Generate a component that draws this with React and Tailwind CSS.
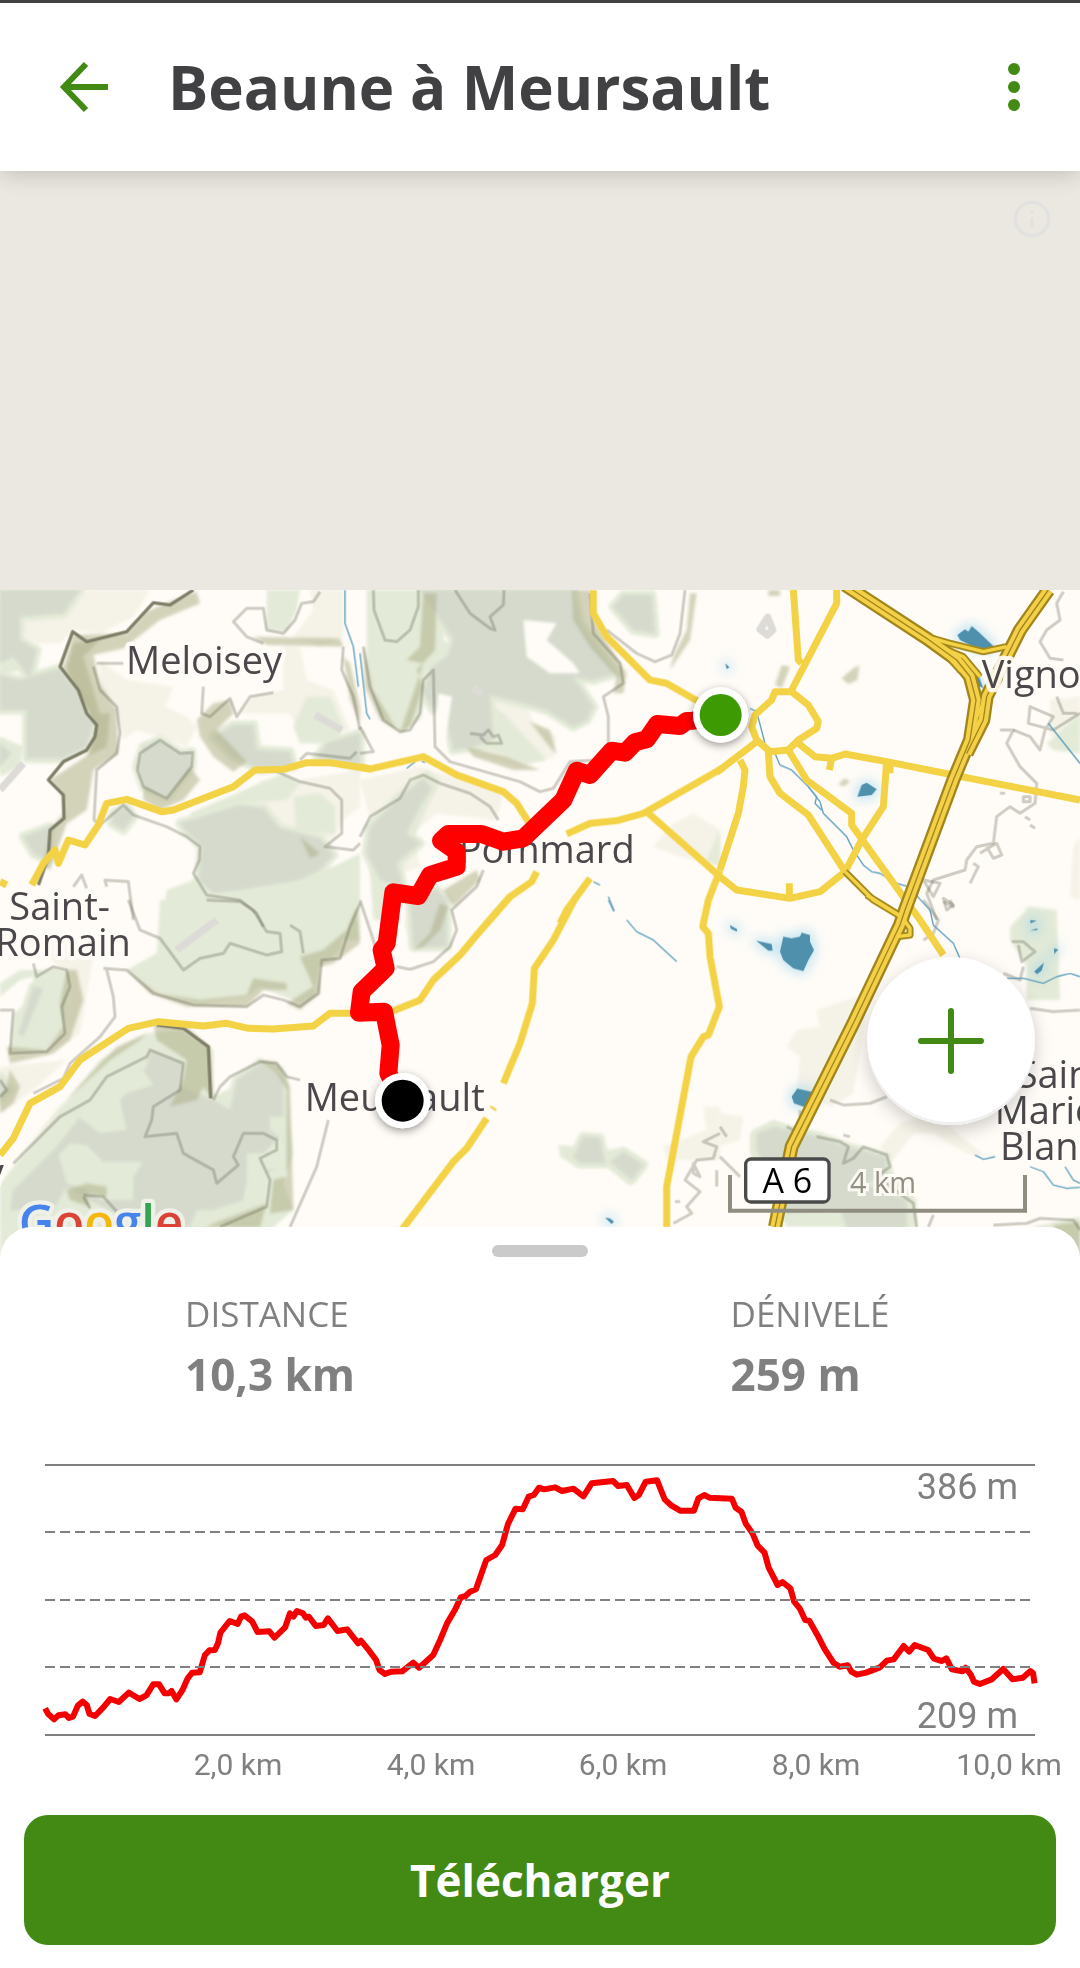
import { Info } from "lucide-react";

// The map is cut in six tiles, each with its own origin.
const tiles = [
  {
    x: 0,
    y: -30,
    cream: [
      "M60 130L130 90L190 90L260 30H450L400 110L300 160L220 150L180 190L110 190L70 170Z",
      "M300 240L380 300L520 320L495 380L560 410L590 440L560 500L480 470L410 450L370 480L350 380L300 330Z",
      "M850 200H900L920 300L1000 330L1050 450L900 470L870 400L720 400L760 350L850 330Z",
      "M790 600L900 600L1080 570V680L1030 720L1000 780L880 760L780 680L720 650Z",
      "M930 30H1030V170L960 200L880 170L940 90Z",
    ],
    green: [
      "M880 440L920 350L990 350L1030 440L1010 490H900Z",
      "M880 650L960 640L1005 680V760H890Z",
      "M800 30H900L890 90L860 155L800 150Z",
      "M0 230L40 210L70 190L110 220L100 300L60 270L0 290Z",
      "M570 700L850 580L900 610L860 660L740 670L600 760Z",
      "M500 930L580 900L640 840L780 900L1000 860L1080 820V1080H480Z",
      "M0 470L70 500L60 560L0 590Z",
    ],
    woods: [
      "M0 30H240L190 100L60 110V180L110 210L90 295L40 230L0 250Z",
      "M0 285L60 300L180 265L240 350L280 430L260 500L190 535H80V390H0Z",
      "M480 480L540 520L575 515V560L500 650L430 620L410 560L430 500Z",
      "M540 730L720 675L790 685L840 745L960 775L1000 825L960 870L900 900L720 930L640 940L595 900L605 800L560 755Z",
      "M640 470L700 435H760L770 510L870 515L880 560L780 570L700 530Z",
      "M70 770L150 740L140 840L100 820Z",
      "M980 490L1080 460V560L950 535Z",
      "M340 700L380 680L400 710L370 750L335 730Z",
      "M0 490L35 520L0 560Z",
    ],
    relief: [
      "M220 165L380 160L440 95L520 60L590 35L600 70L480 120L370 205L280 225L300 310L350 390L355 520L280 570L260 690L200 730L150 870L130 860L150 745L190 700L185 640L150 600L270 520L290 440L240 350L190 260Z",
      "M220 190L300 180L250 230L300 400L330 400L320 500L260 530L290 440L240 340L200 270Z",
      "M590 420L640 370L690 360L700 400L650 450L740 545L700 575L640 530L600 470Z",
      "M430 620L500 655L570 560L600 600L550 660L480 690L430 660Z",
      "M760 170L1020 175L1030 200L800 195Z",
      "M900 770L960 820L930 835Z",
      "M1030 230L1050 360L1080 430V380L1050 250Z",
    ],
    contours: [
      "M960 35L940 65L905 70L885 120L850 160L800 150L790 85L740 85L700 125L740 170L790 190",
      "M280 260L300 330L350 380L360 460L350 520L290 570L282 720L300 735L370 675L400 705L500 740L560 770L600 800L598 840L580 880L620 945L720 960L770 1000L790 1040",
      "M480 480L540 520L578 518L575 560L500 655L430 620L412 570L420 520Z",
      "M610 320L605 400L630 410L690 355L710 410L750 350L820 338",
      "M820 570L900 605L990 625L1025 660L1025 760L975 800L1060 810L1080 790",
      "M900 540L920 520L1050 535L1070 515",
      "M220 920L245 885L260 925M320 920L315 900L385 905L400 1020",
      "M290 250H370",
      "M1030 200L1025 270L1060 350L1080 450",
    ],
    ridges: [
      "M580 30L510 75L460 68L380 155L260 185L218 155L180 260L235 330L260 400L290 435L285 470L260 510L190 545L145 600L190 645L192 715L150 750L145 830L115 915",
    ],
    paths: ["M0 630L70 550", "M945 405L1025 450"],
    streams: ["M1035 30V130L1060 200L1075 320"],
    roads: [
      "M95 915L130 850L165 810L175 850L205 780L255 795L295 735L320 670L380 658L485 695L520 690L700 620L765 570L850 568L920 548L990 548L1110 567",
      "M0 905L20 915",
    ],
  },
  {
    x: 1080,
    y: -30,
    cream: [
      "M370 350L500 370L520 430L590 470L580 530L480 560L330 520L250 440Z",
      "M0 600L180 560L430 640L410 720L230 700L160 760L180 860L80 900Z",
      "M880 800L940 730L1000 700L1080 750V860L960 830Z",
    ],
    green: [
      "M20 30H260L250 180L300 210L290 240L220 260L180 420L120 460L60 400L20 260Z",
      "M20 740L130 640L200 570L240 600L200 680L150 800L110 900V1020H40Z",
      "M360 350L430 400L560 540L500 550L390 510L290 510L280 440Z",
    ],
    woods: [
      "M180 30H640L660 130L770 280L700 300L640 290L700 380L680 420L640 440L560 390L490 370L390 345L400 480L340 500L280 510L260 430L275 345L220 390L190 340L215 260L260 230L280 180Z",
      "M30 740L120 650L190 595L215 625L180 680L140 760L180 790L110 850L130 920L60 900L20 820Z",
      "M790 45H875L885 160L820 150L760 80Z",
      "M150 960L230 930L260 960V1100H160Z",
    ],
    base: [
      "M490 120L590 130L560 180L640 250L660 280H570L500 230Z",
      "M235 340L275 350L265 420L250 530L225 480Z",
    ],
    relief: [
      "M635 30H690L700 120L800 280L790 340L760 340L770 290L690 200L640 120Z",
      "M190 40H230L225 210L170 270L190 320L150 440L120 460L190 250L140 240L180 200Z",
      "M10 200L40 330L110 450L60 420L15 320Z",
      "M940 230L980 150L990 40H1010L990 180L930 270Z",
      "M320 500L440 530L540 570L460 570L340 530Z",
      "M510 425L570 450L590 525L560 490Z",
      "M250 930L350 870L360 900L280 980Z",
    ],
    contours: [
      "M40 30L42 90L75 180L110 185L150 150L175 80V30",
      "M285 30L330 100L390 145L405 150L390 110L430 75L432 30",
      "M690 40L700 160L780 250L790 310L730 350L745 410V490L710 540L630 545L580 625L540 635L480 605L270 545L225 500L220 270L190 300L180 400L150 450L120 455L70 420L30 320L10 200",
      "M975 30L960 160L935 225L885 245L830 220L740 150",
      "M0 770L30 710L120 655L150 600L190 585L240 610L330 640L390 680L415 720",
      "M330 460L370 465L385 450L400 470L415 465L425 490L380 490L360 470",
      "M0 440L40 515L0 520",
      "M370 870L350 920L275 990L290 1050L270 1100L220 1145L150 1168L110 1160",
    ],
    ridges: [],
    paths: ["M340 325L365 340"],
    streams: ["M0 220L20 400L30 418", "M140 565L165 545M185 543L195 548", "M700 905L720 915M745 950L762 992"],
    roads: [
      "M700 30V100L740 170L870 300L920 310L1060 390",
      "M0 560L30 567L190 530L290 585L430 635L470 670L505 725",
      "M620 762L690 730L770 722L850 700L1090 563",
      "M860 695L1080 890",
      "M530 875L515 905L450 950L380 1030",
      "M690 895L620 990L600 1030",
      "M1080 870L1045 960L1028 1040L1045 1060L1050 1130L1078 1280L1045 1365L1030 1370L993 1430L920 1820V1941",
    ],
  },
  {
    x: 2160,
    y: -30,
    cream: ["M990 360L1080 350V470H990Z", "M1060 800L1080 770V960L1050 950Z"],
    green: ["M980 490L1080 400V520L1000 510Z", "M920 980L1010 1010V1060H910Z", "M0 750V860L-40 840Z"],
    woods: [],
    relief: [
      "M185 255L210 260L185 325L165 315Z",
      "M145 30H180V48H145ZM365 295L400 265L418 255L412 300L385 312ZM355 612L375 595L390 605L370 620Z",
    ],
    contours: [
      "M1030 35L1010 70L1020 120L980 150L960 185L990 235L1030 240",
      "M840 450L880 450L860 490L900 560L950 610L945 670L900 700L870 680L830 710L820 790L770 800L740 840L735 870L640 900L620 940L650 1020",
      "M880 450L930 470L960 510L975 450L1000 410L930 380L925 430L1000 450L1080 400",
      "M780 820L830 790L845 825L820 835L800 800M670 955L700 975L680 990ZM915 710L930 720M930 735L945 745M760 850L775 860L750 910M1010 350L1030 400L1070 400",
      "M910 650H930V665H910ZM840 640H855M610 900L660 910L640 950Z",
    ],
    ridges: [],
    paths: ["M143 112L158 150L142 165L120 148Z"],
    water: [
      "M712 165L735 148L745 155L755 138L775 155L820 198L800 210L770 205L720 180Z",
      "M412 650L425 615L440 608L470 628L455 645Z",
      "M765 290L775 285L790 325L770 315Z",
      "M16 250L28 262L20 268Z",
    ],
    streams: [
      "M165 520L180 555L215 570L265 620L300 665L310 700L380 770L400 810L430 855L455 875L480 880L530 910L565 920L630 990L640 1035L700 1090L720 1135",
      "M265 620L290 650L285 670L305 690M90 385L110 395L135 490",
      "M985 430L1080 550",
    ],
    roads: [
      "M220 30L235 240L245 250",
      "M350 30V70L215 330",
      "M215 335H165L155 360L105 405L95 440L110 480L150 515L205 510L235 480L290 445L295 425L265 375Z",
      "M-10 577L110 485",
      "M235 490L285 530L335 535L375 522L500 545L700 585L1080 660",
      "M335 535L328 570M510 550V580",
      "M500 545L490 680L425 780L375 875L300 935L210 955L50 930L0 890",
      "M205 510L260 600L395 700V735L600 1020L670 1125",
      "M145 515L150 590L180 640L265 705L375 875",
      "M60 540L75 570L70 620L55 700L0 870",
      "M208 955V910",
    ],
    ramps: ["M375 875L460 960L540 1008", "M620 170L690 190L790 215L860 200", "M670 205L730 230L780 290", "M640 180L720 270L760 300", "M800 350L760 430"],
    motorways: [
      "M375 15L620 175L710 240L750 290L768 360L750 480L700 600L555 990L540 1035L400 1330L215 1700L165 1941",
      "M985 30L900 150L850 250L800 350L790 420L740 520",
    ],
  },
  {
    x: 0,
    y: 930,
    cream: ["M100 130H280V170L240 400L130 470L210 300L200 220Z", "M0 500L200 480L100 570L0 640Z"],
    green: [
      "M480 0H1060L1020 150L960 200L940 290L900 310L780 260L740 290L590 310L480 280L380 210L470 160Z",
      "M100 220L160 200L210 220L200 300L190 390L140 450L30 460L40 340L100 300Z",
      "M170 640L300 480L440 400L540 390L640 450V590L700 560L770 490L850 500L880 760L850 850L880 930L820 981V1080H0V850L40 800Z",
      "M0 250L60 210H180L60 240L0 290Z",
    ],
    woods: [
      "M360 590L440 500L450 450L550 490L540 560L640 600L690 630L710 540L780 490L850 530V650L810 650V690L850 720L830 800L740 860L730 900L640 930L590 930L570 981H450L350 940L250 890L200 860L160 930L30 930L40 870L170 740L240 650Z",
      "M100 260L130 265L70 410L55 400Z",
      "M0 530L30 570L0 600Z",
    ],
    light: [
      "M340 550L430 510L460 555L380 580L360 600L380 690L300 700L235 650Z",
      "M175 765L210 730L260 735L310 785L430 785L400 830V900H300L260 870L200 850Z",
      "M740 760L790 760L850 700L860 800L800 810L810 860L790 930H730L740 840Z",
    ],
    relief: [
      "M380 210L480 280L600 300L740 285L760 235L860 250V270H790L740 320L560 320L450 280Z",
      "M900 170L970 150L1040 90L1070 20L1080 130L1000 190L960 200V280L900 330L860 310L940 260Z",
      "M460 370L560 380L630 440L640 600L610 560L590 600L510 620L550 540L560 480L470 420Z",
      "M200 210L230 210L250 300L210 420L160 460L30 490L20 440L140 450L190 380L180 310Z",
      "M770 480L830 485L870 560L880 930L810 940L820 840L860 830V570L830 520Z",
      "M200 870L260 850L320 860V890L260 880L270 920L210 900Z",
      "M640 970L800 910L780 981H620Z",
      "M30 510L60 560L40 610L0 640V590L20 560Z",
      "M350 440L440 400L420 420L330 480L200 600L40 790L180 620Z",
    ],
    contours: [
      "M385 0L420 90L480 115L550 210L600 175L670 160L690 130L800 165L845 155L840 100L800 95L760 30L720 5L620 0",
      "M310 205L380 210L460 280L580 315L740 320L790 285L850 300L900 320L955 280L965 180L1020 175L1050 80L1080 10",
      "M320 210L340 290L345 350L300 410L210 490L190 535L100 580",
      "M0 330L40 330L30 460L140 455L195 400L185 320L210 260L200 210L160 200L110 230L100 190",
      "M40 790L180 650L270 600L320 530L440 470L450 450L550 490L540 570L460 620L455 660L435 710L530 700L550 760L640 810L650 850L715 795L700 770L730 700L790 700L830 720L830 750L780 775L810 840L800 920L660 981",
      "M900 540L860 530L830 490L780 485L690 530L660 560L640 600",
      "M250 885L310 890L350 935M250 890L270 925",
      "M985 660L950 800L870 981",
      "M870 75L900 95L910 160",
      "M0 540L20 570L0 590",
    ],
    ridges: ["M470 375L550 385L625 440L632 595"],
    paths: ["M530 150L650 60"],
    streams: [],
    roads: ["M0 765L40 715L90 610L180 560L240 480L385 385L475 365L610 378L680 370L745 385L820 387L940 378L990 340H1080"],
  },
  {
    x: 1080,
    y: 930,
    cream: ["M910 740L1040 690L1030 620H1080V780H920Z", "M130 60L260 50L250 130L160 150Z"],
    green: ["M595 735L650 740L690 705L735 750L790 745L860 790L810 855L740 800L650 800L600 770Z"],
    woods: ["M640 770L670 710L720 715L735 790H660ZM750 785L790 755L850 795L815 840Z", "M155 0H240L230 80L160 130Z"],
    relief: ["M240 10L265 20L240 90L190 140L160 150L210 100Z"],
    contours: [
      "M0 0L40 120L60 200",
      "M1080 700L1030 725L1070 740L1060 775L1010 780L975 840L1020 875L980 920L995 940L940 970M1000 790L1020 830L1000 820ZM945 905H960M1070 810V860",
    ],
    ridges: [],
    paths: [],
    water: ["M735 953L750 955L762 965L755 972Z"],
    streams: ["M745 0L762 35M800 60L830 95L880 120L950 185"],
    roads: [
      "M450 -10L350 105L300 165L220 240L180 300L60 348",
      "M648 -10L580 120L523 205L517 310L480 430L430 550",
      "M380 655L320 745L280 785L125 990",
      "M398 628L402 622",
    ],
  },
  {
    x: 2160,
    y: 930,
    cream: [
      "M290 330L410 290L440 340L400 580L330 620L230 580L240 470L200 440L230 390L300 380Z",
      "M480 740L540 670L640 640L800 770L740 760L640 700L580 700L520 780Z",
      "M0 640L70 650L60 720L0 740Z",
    ],
    green: [
      "M870 80L930 20L1010 30L1020 300H920V200L870 120Z",
      "M90 700L160 660L240 690L380 740L500 760L520 820L590 900V981H200L90 760Z",
      "M940 981L1080 950V1080H940Z",
    ],
    woods: ["M110 700L160 680L300 710L380 740L500 770V830L430 850L560 900V981H380L360 930L200 940L110 750Z"],
    relief: ["M1000 975L1080 965V1080H1040Z"],
    contours: [
      "M290 710L360 725L385 740L370 790L400 775L430 740L500 765L510 800L470 830L580 910L590 981",
      "M330 600L370 615L450 610L500 590",
      "M820 975L920 970L960 955L1060 960L1080 990M640 945L625 981",
      "M875 125L910 125L945 155L905 185L895 135M850 220L900 240L910 200",
      "M930 325L1000 335L1080 330",
      "M610 0L655 60L640 100L610 120M0 680L20 710M0 770L60 830M670 5L700 20L690 0",
      "M200 680L240 700M370 705L390 710M240 630V650",
    ],
    ridges: [],
    paths: [],
    water: [
      "M30 75L52 88L50 95L32 86ZM108 122L155 132L158 152L145 152Z",
      "M180 155L190 110L215 115L240 110L245 98L270 105V125L282 150L265 180L250 213L220 205L190 180Z",
      "M215 590L232 566L285 578L265 625L222 610Z",
      "M930 60L950 62L932 70ZM930 92L952 85V90ZM1002 145L1015 148L1003 162ZM942 215L972 188L965 212L952 222Z",
    ],
    streams: [
      "M860 235H910L970 250L1010 230L1050 220L1080 230",
      "M765 765L790 778L825 770M930 800L970 815L1000 855L1040 865L1080 862M1035 800L1060 840L1080 850",
    ],
    roads: [],
    ramps: ["M440 -15L545 50L570 85L570 105L530 110"],
  },
];

const layers = [
  { name: "cream", className: "fill-[#f5f2e7]", soft: true },
  { name: "green", className: "fill-[#e3ead7]", soft: true },
  { name: "woods", className: "fill-none stroke-[#e3ead7] stroke-[28]", soft: true },
  { name: "woods", className: "fill-[#d5dacd]", soft: true },
  { name: "light", className: "fill-[#e3ead7]", soft: true },
  { name: "base", className: "fill-[#fffcf7]", soft: true },
  { name: "relief", className: "fill-[#aeb188]/55", soft: true },
  { name: "contours", className: "fill-none stroke-[#5c5c4c]/30 stroke-[9]" },
  { name: "ridges", className: "fill-none stroke-[#80806a] stroke-[10]" },
  { name: "paths", className: "fill-none stroke-[#dddbd8] stroke-[22]" },
  { name: "water", className: "fill-[#8fd0ee]/40 stroke-[#8fd0ee]/40 stroke-[24]", glow: true },
  { name: "water", className: "fill-[#4f90ad]" },
  { name: "streams", className: "fill-none stroke-[#5c9fbd] stroke-[4]" },
  { name: "ramps", className: "fill-none stroke-[#a58a1c] stroke-[20]" },
  { name: "roads", className: "fill-none stroke-[#f4d245] stroke-[21]" },
  { name: "motorways", className: "fill-none stroke-[#a1861a] stroke-[42]" },
  { name: "ramps", className: "fill-none stroke-[#a58a1c] stroke-[20]" },
  { name: "motorways", className: "fill-none stroke-[#f4d04a] stroke-[28]" },
  { name: "ramps", className: "fill-none stroke-[#f4d245] stroke-[10]" },
  { name: "motorways", className: "fill-none stroke-[#a1861a] stroke-[4]" },
];

const places = [
  { name: "Meloisey", x: 378, y: 253 },
  { name: "Pommard", x: 1376, y: 820 },
  { name: "Vignoles", x: 2945, y: 295 },
  { name: "Saint-", x: 28, y: 990 },
  { name: "Romain", x: -14, y: 1097 },
  { name: "y", x: -46, y: 1787 },
  { name: "Meursault", x: 914, y: 1562 },
  { name: "Sainte-", x: 3050, y: 1493 },
  { name: "Marie-la-", x: 2984, y: 1602 },
  { name: "Blanche", x: 3000, y: 1710 },
];

const route =
  "M2163 375L2080 392L2060 393L2040 408L1972 402L1940 448L1905 457L1875 488L1835 482L1770 555L1730 542L1690 630L1570 745L1510 755L1445 732H1345L1323 752L1370 785V830L1290 855L1255 918L1180 907L1160 1060L1145 1080L1157 1135L1085 1205L1077 1268L1152 1265L1172 1365L1165 1450L1208 1533";

const profile =
  "M131 805L140 822L157 838L170 826L190 823L200 834L212 830L226 797L240 785L252 795L260 822L276 828L300 802L320 777L345 786L374 758L405 777L425 766L445 733H462L478 760H490L498 753L512 778L530 750L545 715L558 698L580 697L595 645L608 631L624 630L633 610L640 578L667 543L690 552L700 530L710 526L732 544L748 576L782 574L797 593L828 562L842 520L852 530L862 513L880 520L888 533L897 530L917 558L940 555L952 535L980 573L1008 568L1040 610L1048 602L1072 632L1092 660L1102 690L1118 702L1135 695L1168 694L1200 668L1217 683L1258 645L1278 600L1298 550L1322 508L1338 472L1352 468L1365 455L1382 448L1412 360L1438 345L1458 315L1475 252L1497 206L1518 208L1535 170L1550 165L1565 143L1580 148L1612 142L1632 153L1665 146L1694 169L1718 130L1780 123L1795 138L1820 135L1842 174L1855 165L1875 125L1908 121L1930 178L1950 197L1975 212L2003 212L2015 212L2028 175L2045 165L2060 173L2125 176L2136 203L2153 215L2165 250L2185 280L2200 317L2220 338L2232 383L2258 435L2272 426L2295 445L2306 485L2322 505L2338 540L2350 542L2375 588L2395 628L2420 668L2438 680L2462 676L2472 695L2488 704L2515 698L2555 682L2575 662L2595 658L2624 618L2640 635L2656 615L2695 630L2712 656L2735 663L2748 655L2764 688L2795 694L2804 683L2820 706L2828 725L2845 732L2880 718L2913 687L2940 718L2970 713L2992 693L3000 700L3004 730";

const distances = [
  { label: "2,0 km", x: 238 },
  { label: "4,0 km", x: 431 },
  { label: "6,0 km", x: 623 },
  { label: "8,0 km", x: 816 },
  { label: "10,0 km", x: 1009 },
];

const filterFor = (layer) => {
  if (layer.glow) return "url(#glow)";
  return layer.soft ? "url(#soft)" : undefined;
};

const Header = () => {
  return (
    <header className="relative z-10 flex h-[171px] items-center border-t-[3px] border-[#414042] bg-white pr-[50px] pl-12 shadow-[0_2px_22px_rgba(0,0,0,0.2)]">
      <button type="button" aria-label="Retour" className="w-[72px] text-[#428a13]">
        <svg viewBox="0 0 72 72" className="size-[72px]" fill="none" stroke="currentColor" strokeWidth="6">
          <path d="M60 36H17M38 13L16 36L38 59" />
        </svg>
      </button>
      <h1 className="ml-12 flex-1 truncate text-[60px] leading-[80px] font-bold text-[#414042]">
        Beaune à Meursault
      </h1>
      <button type="button" aria-label="Plus d'options" className="flex w-8 flex-col items-center gap-1.5">
        <span className="size-3 rounded-full bg-[#428a13]" />
        <span className="size-3 rounded-full bg-[#428a13]" />
        <span className="size-3 rounded-full bg-[#428a13]" />
      </button>
    </header>
  );
};

const RouteMap = () => {
  return (
    <svg viewBox="0 0 3240 2010" className="block w-full bg-[#fffcf7]" role="img" aria-label="Carte du parcours">
      <defs>
        <filter id="soft" x="-5%" y="-5%" width="110%" height="110%">
          <feGaussianBlur stdDeviation="5" />
        </filter>
        <filter id="glow" x="-5%" y="-5%" width="110%" height="110%">
          <feGaussianBlur stdDeviation="18" />
        </filter>
        <filter id="shadow" x="-50%" y="-50%" width="200%" height="200%">
          <feDropShadow dx="0" dy="8" stdDeviation="12" floodOpacity="0.4" />
        </filter>
      </defs>
      {layers.map((layer, i) => (
        <g key={i} className={layer.className} strokeLinejoin="round" filter={filterFor(layer)}>
          {tiles.map((tile) => (
            <g key={`${tile.x}-${tile.y}`} transform={`translate(${tile.x} ${tile.y})`}>
              {(tile[layer.name] || []).map((d) => (
                <path key={d} d={d} />
              ))}
            </g>
          ))}
        </g>
      ))}
      <g
        className="fill-[#4b484b] stroke-[#fffcf7]/90 text-[114px]"
        strokeWidth="26"
        strokeLinejoin="round"
        paintOrder="stroke"
      >
        {places.map((place) => (
          <text key={place.name} x={place.x} y={place.y}>
            {place.name}
          </text>
        ))}
      </g>
      <path d="M2190 1755V1862H3075V1755" className="fill-none stroke-[#8f8d7f]" strokeWidth="12" />
      <rect x="2237" y="1707" width="250" height="129" rx="16" className="fill-white stroke-[#4a4a4a]" strokeWidth="10" />
      <text x="2362" y="1809" textAnchor="middle" className="fill-black text-[102px]">
        A 6
      </text>
      <text
        x="2550"
        y="1809"
        className="fill-[#929083] stroke-[#fffcf7]/90 text-[87px]"
        strokeWidth="18"
        paintOrder="stroke"
      >
        4 km
      </text>
      <text
        x="56"
        y="1950"
        className="stroke-[#eff1e9] text-[147px] font-semibold"
        strokeWidth="26"
        strokeLinejoin="round"
        paintOrder="stroke"
      >
        <tspan className="fill-[#4683ea]">G</tspan>
        <tspan className="fill-[#da4436]">o</tspan>
        <tspan className="fill-[#f5b70f]">o</tspan>
        <tspan className="fill-[#4683ea]">g</tspan>
        <tspan className="fill-[#33a452]">l</tspan>
        <tspan className="fill-[#da4436]">e</tspan>
      </text>
      <path d={route} className="fill-none stroke-[#ff0000]" strokeWidth="54" strokeLinejoin="round" />
      <circle cx="2162" cy="375" r="83" className="fill-white" filter="url(#shadow)" />
      <circle cx="2162" cy="375" r="63" className="fill-[#3d9a02]" />
      <circle cx="1208" cy="1532" r="83" className="fill-white" filter="url(#shadow)" />
      <circle cx="1208" cy="1532" r="63" className="fill-black" />
    </svg>
  );
};

const ElevationChart = () => {
  return (
    <svg
      viewBox="0 0 1080 360"
      className="block w-full fill-[#808080] font-[Roboto]"
      role="img"
      aria-label="Profil altimétrique"
    >
      <svg width="1080" height="360" viewBox="0 0 3136 1080" preserveAspectRatio="none">
        <path
          d={profile}
          fill="none"
          stroke="#f40000"
          strokeWidth="6"
          strokeLinejoin="round"
          vectorEffect="non-scaling-stroke"
        />
      </svg>
      <g stroke="#808080" strokeWidth="2">
        <path d="M45 25H1035M45 295H1035" />
        <path d="M45 92H1035M45 160H1035M45 227H1035" strokeDasharray="10 5" />
      </g>
      <text x="1018" y="59" textAnchor="end" className="text-[36px]">
        386 m
      </text>
      <text x="1018" y="288" textAnchor="end" className="text-[36px]">
        209 m
      </text>
      {distances.map((distance) => (
        <text key={distance.label} x={distance.x} y="335" textAnchor="middle" className="text-[30px]">
          {distance.label}
        </text>
      ))}
    </svg>
  );
};

const App = () => {
  return (
    <div className="bg-white font-['Open_Sans',sans-serif]">
      <Header />
      <main>
        <section className="relative bg-[#ebe8e1]">
          <div className="flex h-[419px] justify-end pt-7 pr-7">
            <button type="button" aria-label="Informations" className="size-10">
              <Info className="size-10 text-[#e1e2e0]" strokeWidth={2} />
            </button>
          </div>
          <RouteMap />
          <button
            type="button"
            aria-label="Ajouter"
            className="absolute right-[45px] bottom-[135px] flex size-[168px] items-center justify-center rounded-full bg-white shadow-[0_6px_18px_rgba(0,0,0,0.2),inset_0_-3px_0_#f0f0f0]"
          >
            <svg viewBox="0 0 66 66" className="size-[66px]" stroke="#428a13" strokeWidth="6" strokeLinecap="round">
              <path d="M33 3V63M3 33H63" />
            </svg>
          </button>
        </section>
        <section className="relative -mt-[33px] rounded-t-[32px] bg-white pt-[18px] pb-6">
          <div className="mx-auto h-3 w-24 rounded-full bg-[#cacaca]" />
          <dl className="mt-[31px] grid grid-cols-2 text-[#808080]">
            <div className="mx-auto">
              <dt className="text-[35px] leading-[52px]">DISTANCE</dt>
              <dd className="text-[44px] leading-[68px] font-bold">10,3 km</dd>
            </div>
            <div className="mx-auto">
              <dt className="text-[35px] leading-[52px]">DÉNIVELÉ</dt>
              <dd className="text-[44px] leading-[68px] font-bold">259 m</dd>
            </div>
          </dl>
          <div className="mt-8">
            <ElevationChart />
          </div>
          <div className="mt-[15px] px-6">
            <button
              type="button"
              className="h-[130px] w-full rounded-3xl bg-[#428a13] text-[44px] font-bold text-white"
            >
              Télécharger
            </button>
          </div>
        </section>
      </main>
    </div>
  );
};
export default App;
